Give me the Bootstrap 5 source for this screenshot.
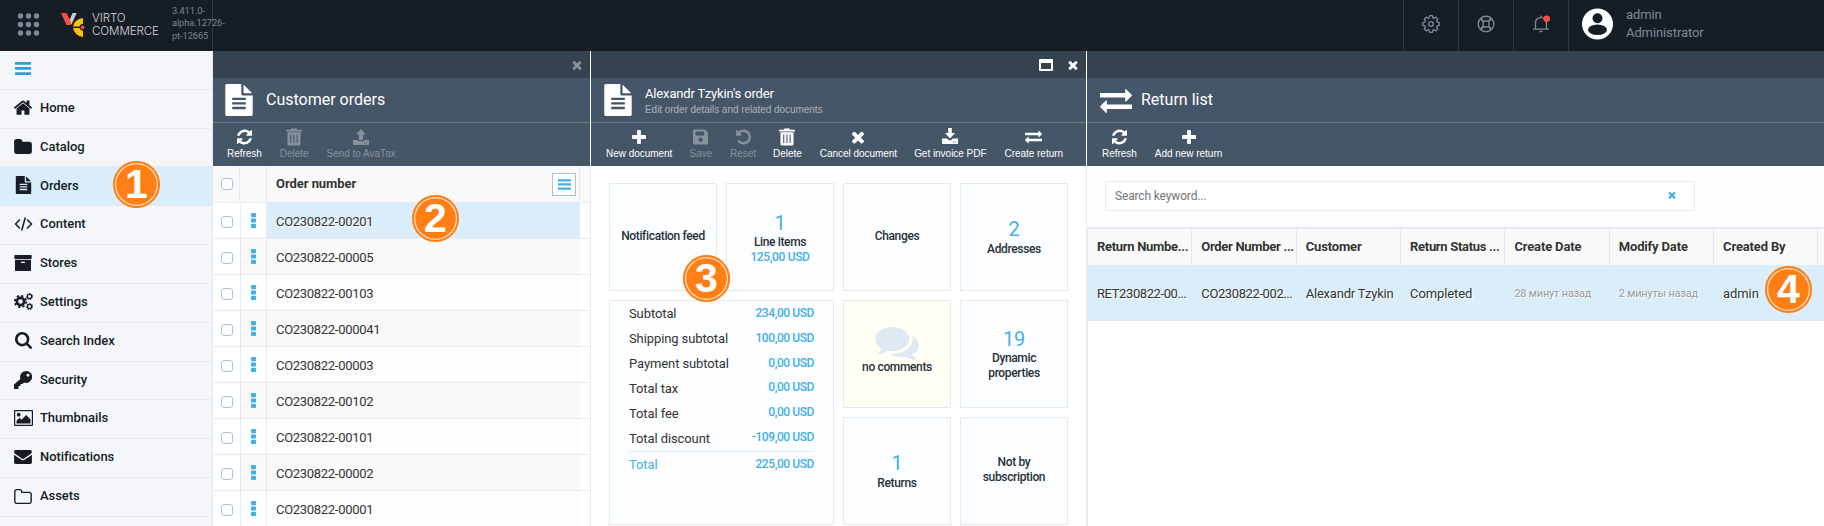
<!DOCTYPE html>
<html lang="en">
<head>
<meta charset="utf-8">
<title>Virto Commerce</title>
<meta name="viewport" content="width=device-width, initial-scale=1">
<link href="https://cdn.jsdelivr.net/npm/bootstrap@5.3.0/dist/css/bootstrap.min.css" rel="stylesheet">
<style>
body{font-family:Roboto,"Liberation Sans",sans-serif;font-size:13px;line-height:18px;color:#333;background:#fff;height:526px;overflow:hidden}
svg{display:block;fill:currentColor}
.topbar{height:51px;background:#161d25;color:#7e8a97}
.brand{width:213px;border-right:1px solid #2a3a4c;padding-left:17px}
.brandname{color:#d6d9dc;font:300 11.6px/13px Inter,sans-serif;letter-spacing:-.1px;width:70px;margin-left:7px;margin-top:-2px}
.ver{font-size:9.3px;line-height:12.5px;letter-spacing:-.1px;width:40px;margin-left:10px;margin-top:-4px;color:#7b8692}
.tcell{width:55px;border-left:1px solid #2a3a4c}
.user{width:256px;border-left:1px solid #2a3a4c;padding-left:12px;font-size:13px;letter-spacing:-.1px;color:#7e8a97}
.side{width:213px;background:#f4f6fa;border-right:1px solid #e4e8f2;color:#161d25;font-weight:500;letter-spacing:-.05px}
.sitem{height:38.82px;border-bottom:1px solid #e7eaf3;padding-left:14px;padding-bottom:1.6px}
.sitem .ico{width:19px;margin-right:7px}
.sitem.on{background:#d9eefa}
.blade{border-right:1px solid #fff}
.bl1{width:378px}.bl2{width:496px}
.blbody{border-right:1px solid #e7eaf3;margin-right:-1px;height:360px}
.bltop{height:27px;background:#35424f;color:#fff;padding-right:9px}
.bl1 .bltop,.bl2 .bltop{padding-right:8px}
.blhead{height:45px;background:#465669;border-bottom:1px solid #6a7882;color:#fff}
.bltitle{font-size:16px;line-height:20px}
.blsub{font:10px/13px "Liberation Sans",sans-serif;letter-spacing:-.05px;color:#aab1b9;margin-top:1px}
.bltools{height:43px;background:#465669;color:#fff;font:10px/12px "Liberation Sans",sans-serif;letter-spacing:-.03px}
.tool{padding:5px 9px 0;white-space:nowrap}
.tool svg{margin-bottom:2px}
.off{color:#86919c}
.grow{height:36px;border-bottom:1px solid #e7eaf3}
.c1{width:28px;border-right:1px solid #e7eaf3;padding-left:8px}
.c2{width:26px;border-right:1px solid #e7eaf3}
.c3{width:313px;padding:2px 0 0 9px;letter-spacing:-.3px}
.grow:nth-child(even) .c2,.grow:nth-child(even) .c3{background:#f9f9f9}
.grow:nth-child(odd) .c2,.grow:nth-child(odd) .c3{background:#fdfdfd}
.grow.sel .c2{background:#fff}
.grow.sel .c3{background:#d9eefa;text-shadow:1px 1px 0 #fff}
.ghead{height:37px;background:#f9f9f9;border-bottom:1px solid #e7eaf3;font-weight:700;text-shadow:1px 1px 0 #fff}
.ghead .c3{padding-top:0}
.chk{width:12px;height:12px;border:1px solid #a5c2d8;border-radius:3px;background:#fff}
.grow .chk{margin-top:2px}
.menubtn{width:24px;height:23px;border:1px solid #a5c2d8;color:#43b0e6;background:#fff}
.tiles{display:grid;grid-template-columns:repeat(4,108px);grid-auto-rows:108px;gap:9px;padding:17px 0 0 18px}
.tile{border:1px solid #e2ebf2;background:#fcfdff;color:#26303b;font-size:12px;letter-spacing:-.35px;line-height:15px;font-weight:500;text-align:center;padding:0 10px}
.num{font-size:20px;line-height:24px;font-weight:400}
.blue{color:#43b0e6}
.totals{grid-column:span 2;grid-row:span 2;border:1px solid #e2ebf2;background:#fcfdff;padding:1px 19px 0}
.trow{height:24.85px;font-size:13px;letter-spacing:-.1px}
.trow b{font-size:12px;font-weight:500;letter-spacing:-.42px;margin-top:-3px}
.searcharea{height:61px;background:#fcfdff;padding:15px 0 0 18px}
.searchbox{width:590px;height:30px;border:1px solid #e7eaf3;background:#fff;padding:0 18px 0 9px;font-size:12px;letter-spacing:-.15px;color:#757575}
.rt{border-top:2px solid #e7eaf3;border-left:1px solid #e7eaf3;height:300px}
.rcell{width:104.35px;padding-left:9px;white-space:nowrap;letter-spacing:-.1px}
.rhead{height:36px;background:#f9f9f9;font-weight:700;text-shadow:1px 1px 0 #fff}
.rhead .rcell{border-right:1px solid #e4e8f2;line-height:36px;letter-spacing:-.15px}
.rrow{height:56px;background:#d9eefa;border-bottom:1px solid #e7eaf3;line-height:57px;text-shadow:1px 1px 0 #fff}
.rrow .ago{font-size:11px;letter-spacing:-.2px;line-height:58px;color:#9a9a9a}
.pin{position:absolute;width:47px;height:47px;border-radius:50%;background:#ff7f14;box-shadow:inset 0 0 0 2px #ff7f14,inset 0 0 0 3.2px #ffe3cc;color:#fff;font:700 41px/46px "Liberation Sans",sans-serif;text-align:center}
</style>
</head>
<body class="position-relative">
<svg width="0" height="0" class="position-absolute">
<symbol id="times" viewBox="302 238 1188 1316"><path d="M1490 1322q0 40-28 68l-136 136q-28 28-68 28t-68-28l-294-294-294 294q-28 28-68 28t-68-28l-136-136q-28-28-28-68t28-68l294-294-294-294q-28-28-28-68t28-68l136-136q28-28 68-28t68 28l294 294 294-294q28-28 68-28t68 28l136 136q28 28 28 68t-28 68l-294 294 294 294q28 28 28 68z"/></symbol>
<symbol id="plus" viewBox="192 128 1408 1408"><path d="M1600 736v192q0 40-28 68t-68 28h-416v416q0 40-28 68t-68 28h-192q-40 0-68-28t-28-68v-416h-416q-40 0-68-28t-28-68v-192q0-40 28-68t68-28h416v-416q0-40 28-68t68-28h192q40 0 68 28t28 68v416h416q40 0 68 28t28 68z"/></symbol>
<symbol id="refresh" viewBox="128 128 1536 1536"><path d="M1639 1056q0 5-1 7-64 268-268 434.5t-478 166.5q-146 0-282.5-55t-243.5-157l-129 129q-19 19-45 19t-45-19-19-45v-448q0-26 19-45t45-19h448q26 0 45 19t19 45-19 45l-137 137q71 66 161 102t187 36q134 0 250-65t186-179q11-17 53-117 8-23 30-23h192q13 0 22.5 9.5t9.5 22.5zm25-800v448q0 26-19 45t-45 19h-448q-26 0-45-19t-19-45 19-45l138-138q-148-137-349-137-134 0-250 65t-186 179q-11 17-53 117-8 23-30 23h-199q-13 0-22.5-9.5t-9.5-22.5v-7q65-268 270-434.5t480-166.5q146 0 284 55.5t245 156.5l130-129q19-19 45-19t45 19 19 45z"/></symbol>
<symbol id="undo" viewBox="128 128 1536 1536"><path d="M1664 896q0 156-61 298t-164 245-245 164-298 61q-172 0-327-72.5t-264-204.5q-7-10-6.5-22.5t8.5-20.5l137-138q10-9 25-9 16 2 23 12 73 95 179 147t225 52q104 0 198.5-40.5t163.5-109.5 109.5-163.5 40.5-198.5-40.5-198.5-109.5-163.5-163.5-109.5-198.5-40.5q-98 0-188 35.5t-160 101.5l137 138q31 30 14 69-17 40-59 40h-448q-26 0-45-19t-19-45v-448q0-42 40-59 39-17 69 14l130 129q107-101 244.5-156.5t284.5-55.5q156 0 298 61t245 164 164 245 61 298z"/></symbol>
<symbol id="exchange" viewBox="0 288 1792 1344"><path d="M1792 1184v192q0 13-9.5 22.5t-22.5 9.5h-1376v192q0 13-9.5 22.5t-22.5 9.5q-12 0-24-10l-319-320q-9-9-9-22 0-14 9-23l320-320q9-9 23-9 13 0 22.5 9.5t9.5 22.5v192h1376q13 0 22.5 9.5t9.5 22.5zm0-544q0 14-9 23l-320 320q-9 9-23 9-13 0-22.5-9.5t-9.5-22.5v-192h-1376q-13 0-22.5-9.5t-9.5-22.5v-192q0-13 9.5-22.5t22.5-9.5h1376v-192q0-14 9-23t23-9q12 0 24 10l319 319q9 9 9 23z"/></symbol>
<symbol id="file" viewBox="128 0 1536 1792"><path d="M1596 476q14 14 28 36h-472v-472q22 14 36 28zm-476 164h544v1056q0 40-28 68t-68 28h-1344q-40 0-68-28t-28-68v-1600q0-40 28-68t68-28h800v544q0 40 28 68t68 28zm160 736v-64q0-14-9-23t-23-9h-704q-14 0-23 9t-9 23v64q0 14 9 23t23 9h704q14 0 23-9t9-23zm0-256v-64q0-14-9-23t-23-9h-704q-14 0-23 9t-9 23v64q0 14 9 23t23 9h704q14 0 23-9t9-23zm0-256v-64q0-14-9-23t-23-9h-704q-14 0-23 9t-9 23v64q0 14 9 23t23 9h704q14 0 23-9t9-23z"/></symbol>
<symbol id="trash" viewBox="0 0 16 17"><path d="M5.5 0h5l.8 1.2H16V3H0V1.200h4.700zM1.500 3.700h13V15.500q0 1.500-1.500 1.500h-10q-1.500 0-1.500-1.500zM4.200 6v8.500h1.100V6zm3.200 0v8.500h1.100V6zm3.200 0v8.500h1.100V6z" fill-rule="evenodd"/></symbol>
<symbol id="up" viewBox="0 0 16 16"><path d="M8 0l5 5.500h-3V11H6V5.500H3zM0 11h5v1.200h6V11h5v4.200q0 .8-.8.800H.8Q0 16 0 15.200zM11 13.500v1h1v-1zm2.200 0v1h1v-1z" fill-rule="evenodd"/></symbol>
<symbol id="down" viewBox="0 0 16 16"><path d="M6.200 0h3.600v5H13L8 10.500 3 5h3.200zM0 10.500h5l1.800 1.800h2.400l1.800-1.800h5v4.700q0 .8-.8.800H.8Q0 16 0 15.200zM11 13.500v1h1v-1zm2.200 0v1h1v-1z" fill-rule="evenodd"/></symbol>
<symbol id="save" viewBox="0 0 15 15"><path d="M1 0h11l3 3v11q0 1-1 1H1q-1 0-1-1V1q0-1 1-1zm1.500 2v4h8.500V2zM7.500 8a2.200 2.200 0 1 0 .01 0z" fill-rule="evenodd"/></symbol>
<symbol id="bars" viewBox="0 0 16 13"><path d="M0 0h16v2.800H0zM0 5h16v2.800H0zM0 10.200h16V13H0z"/></symbol>
</svg>

<header class="topbar d-flex">
  <div class="brand d-flex align-items-center flex-shrink-0">
    <svg width="23" height="24" viewBox="0 0 23 24" style="margin-top:-3px"><g><circle cx="3.500" cy="4" r="2.700"/><circle cx="11.500" cy="4" r="2.700"/><circle cx="19.500" cy="4" r="2.700"/><circle cx="3.500" cy="12.500" r="2.700"/><circle cx="11.500" cy="12.500" r="2.700"/><circle cx="19.500" cy="12.500" r="2.700"/><circle cx="3.500" cy="21" r="2.700"/><circle cx="11.500" cy="21" r="2.700"/><circle cx="19.500" cy="21" r="2.700"/></g></svg>
    <svg width="25" height="25" viewBox="0 0 25 25" class="flex-shrink-0" style="margin-left:20px;margin-top:-3px"><path fill="#ff4a4a" d="M1 1h5.500l3.500 7 1-1v6H6.500z"/><path fill="#c9cbcd" d="M12.500 1h4.200L11.500 12.500 9.800 7.500z"/><path fill="#ffc107" d="M23 6v5.800a4.500 4.500 0 0 0-3.500 2.700H13Q14.500 7 23 6zM13 16h6.500a4.500 4.500 0 0 0 3.500 2.800V25Q14.500 23.500 13 16z"/><circle cx="22.600" cy="15.300" r="1.900" fill="#ff4a4a"/></svg>
    <div class="brandname">VIRTO COMMERCE</div>
    <div class="ver">3.411.0-<br>alpha.12726-<br>pt-12665</div>
  </div>
  <div class="flex-grow-1"></div>
  <div class="tcell d-flex align-items-center justify-content-center"><svg width="18" height="18" viewBox="0 0 18 18" stroke="currentColor" stroke-width="1.300" style="margin-top:-4px;fill:none"><circle cx="9" cy="9" r="2.300"/><path stroke-linejoin="round" d="M7.600.7h2.800l.4 2.100 1.200.5 1.800-1.200 2 2-1.200 1.800.5 1.200 2.200.5v2.800l-2.200.5-.5 1.200 1.200 1.800-2 2-1.800-1.200-1.200.5-.4 2.100H7.600l-.4-2.100-1.200-.5-1.800 1.200-2-2 1.200-1.800-.5-1.200-2.200-.5V7.600l2.200-.5.5-1.200-1.200-1.800 2-2L6 3.300l1.200-.5z"/></svg></div>
  <div class="tcell d-flex align-items-center justify-content-center"><svg width="18" height="18" viewBox="0 0 18 18" stroke="currentColor" stroke-width="1.400" style="margin-top:-4px;fill:none"><circle cx="9" cy="9" r="7.800"/><rect x="6" y="6" width="6" height="6" rx="1.800"/><path d="M6.500 6.500 4 3.300M6.500 6.500 3.300 4M11.500 6.500 14 3.300M11.500 6.500 14.700 4M6.500 11.500 4 14.700M6.500 11.500 3.300 14M11.500 11.500l2.500 3.200M11.500 11.500l3.200 2.500"/></svg></div>
  <div class="tcell d-flex align-items-center justify-content-center"><svg width="18" height="18" viewBox="0 0 18 18" style="margin-top:-4px"><path d="M1 14.200h16M3.500 14V8.200Q3.500 2.600 9 2.600t5.500 5.600V14M9 2.600V.6M7.500 16.500h3" fill="none" stroke="currentColor" stroke-width="1.300"/><circle cx="14.700" cy="3.700" r="3.300" fill="#ff4a4a"/></svg></div>
  <div class="user d-flex">
    <svg width="33" height="33" viewBox="0 0 33 33" class="mt-2"><circle cx="16.500" cy="16" r="15.500" fill="#fff"/><circle cx="16.500" cy="10.300" r="5" fill="#161d25"/><ellipse cx="16.500" cy="21.800" rx="9.500" ry="5.300" fill="#161d25"/></svg>
    <div style="margin:6px 0 0 12px">admin<br>Administrator</div>
  </div>
</header>

<main class="d-flex" style="height:475px">
  <nav class="side flex-shrink-0">
    <div class="sitem d-flex align-items-center"><span class="ico blue"><svg width="16" height="13" style="color:#2f9fd8;margin:-1px 0 0 1px"><use href="#bars"/></svg></span></div>
    <div class="sitem d-flex align-items-center"><span class="ico"><svg width="18" height="15" viewBox="90 240 1612 1300"><path d="M1472 992v480q0 26-19 45t-45 19h-384v-384h-256v384h-384q-26 0-45-19t-19-45v-480q0-1 .5-3t.5-3l575-474 575 474q1 2 1 6zm223-69l-62 74q-8 9-21 11h-3q-13 0-21-7l-692-577-692 577q-12 8-24 7-13-2-21-11l-62-74q-8-10-7-23.500t11-21.500l719-599q32-26 76-26t76 26l244 204v-195q0-14 9-23t23-9h192q14 0 23 9t9 23v408l219 182q10 8 11 21.500t-7 23.500z"/></svg></span>Home</div>
    <div class="sitem d-flex align-items-center"><span class="ico"><svg width="18" height="15" viewBox="64 128 1664 1408"><path d="M1728 608v704q0 92-66 158t-158 66h-1216q-92 0-158-66t-66-158v-960q0-92 66-158t158-66h320q92 0 158 66t66 158v32h672q92 0 158 66t66 158z"/></svg></span>Catalog</div>
    <div class="sitem on d-flex align-items-center"><span class="ico"><svg width="17" height="18" style="margin-left:1px;margin-top:-1px"><use href="#file"/></svg></span>Orders</div>
    <div class="sitem d-flex align-items-center"><span class="ico"><svg width="19" height="14" viewBox="0 0 19 14" style="fill:none" stroke="currentColor" stroke-width="1.500"><path d="M6 2.500 1.500 7 6 11.500M13 2.500 17.500 7 13 11.500M11.300.5 7.700 13.500"/></svg></span>Content</div>
    <div class="sitem d-flex align-items-center"><span class="ico"><svg width="18" height="16" viewBox="64 128 1664 1536"><path d="M1088 832q0-26-19-45t-45-19h-256q-26 0-45 19t-19 45 19 45 45 19h256q26 0 45-19t19-45zm576-192v960q0 26-19 45t-45 19h-1408q-26 0-45-19t-19-45v-960q0-26 19-45t45-19h1408q26 0 45 19t19 45zm64-448v256q0 26-19 45t-45 19h-1536q-26 0-45-19t-19-45v-256q0-26 19-45t45-19h1536q26 0 45 19t19 45z"/></svg></span>Stores</div>
    <div class="sitem d-flex align-items-center"><span class="ico"><svg width="19" height="17" viewBox="0 0 19 17" style="fill:none" stroke="currentColor"><circle cx="6.500" cy="8.500" r="3.700" stroke-width="2.700"/><circle cx="6.500" cy="8.500" r="5.700" stroke-width="1.800" stroke-dasharray="2.240 2.240"/><circle cx="15.500" cy="3.500" r="2.100" stroke-width="1.300"/><circle cx="15.500" cy="3.500" r="3.100" stroke-width="1" stroke-dasharray="1.390 1.390"/><circle cx="15.500" cy="13.500" r="2.100" stroke-width="1.300"/><circle cx="15.500" cy="13.500" r="3.100" stroke-width="1" stroke-dasharray="1.390 1.390"/></svg></span>Settings</div>
    <div class="sitem d-flex align-items-center"><span class="ico"><svg width="17" height="17" viewBox="64 128 1664 1664" style="margin-left:1px"><path d="M1216 832q0-185-131.500-316.500t-316.500-131.500-316.500 131.500-131.500 316.500 131.500 316.500 316.500 131.500 316.500-131.500 131.500-316.500zm512 832q0 52-38 90t-90 38q-54 0-90-38l-343-342q-179 124-399 124-143 0-273.500-55.500t-225-150-150-225-55.500-273.500 55.500-273.500 150-225 225-150 273.500-55.500 273.500 55.500 225 150 150 225 55.500 273.500q0 220-124 399l343 343q37 37 37 90z"/></svg></span>Search Index</div>
    <div class="sitem d-flex align-items-center"><span class="ico"><svg width="18" height="18" viewBox="0 0 18 18"><path fill-rule="evenodd" d="M12 0a6 6 0 1 1-2 11.600L8.500 13H6.500v2h-2v3H0v-4.500L6.400 8A6 6 0 0 1 12 0zm2 2.800a1.500 1.500 0 1 0 .01 0z"/></svg></span>Security</div>
    <div class="sitem d-flex align-items-center"><span class="ico"><svg width="19" height="16" viewBox="0 0 19 16"><path fill-rule="evenodd" d="M1 0h17q1 0 1 1v14q0 1-1 1H1q-1 0-1-1V1q0-1 1-1zm.2 1.200v13.600h16.600V1.200z"/><circle cx="4.700" cy="4.700" r="1.900"/><path d="M2.500 13.500v-2.800l3-3 2 2L12.200 5l4.300 4.500v4z"/></svg></span>Thumbnails</div>
    <div class="sitem d-flex align-items-center"><span class="ico"><svg width="18" height="14" viewBox="0 256 1792 1408"><path d="M1792 710v794q0 66-47 113t-113 47h-1472q-66 0-113-47t-47-113v-794q44 49 101 87 362 246 497 345 57 42 92.500 65.500t94.500 48 110 24.500h2q51 0 110-24.500t94.500-48 92.500-65.500q170-123 498-345 57-39 100-87zm0-294q0 79-49 151t-122 123q-376 261-468 325-10 7-42.500 31t-54 38.500-52 32.500-57.500 27-50 9h-2q-23 0-50-9t-57.500-27-52-32.500-54-38.500-42.500-31q-91-64-262-182.500t-205-142.500q-62-42-117-115.500t-55-136.500q0-78 41.500-130t118.500-52h1472q65 0 112.500 47t47.500 113z"/></svg></span>Notifications</div>
    <div class="sitem d-flex align-items-center"><span class="ico"><svg width="18" height="15" viewBox="64 128 1664 1408"><path d="M1600 1312v-704q0-40-28-68t-68-28h-704q-40 0-68-28t-28-68v-64q0-40-28-68t-68-28h-320q-40 0-68 28t-28 68v960q0 40 28 68t68 28h1216q40 0 68-28t28-68zm128-704v704q0 92-66 158t-158 66h-1216q-92 0-158-66t-66-158v-960q0-92 66-158t158-66h320q92 0 158 66t66 158v32h672q92 0 158 66t66 158z"/></svg></span>Assets</div>
  </nav>

  <section class="blade bl1 flex-shrink-0">
    <div class="bltop d-flex align-items-center justify-content-end off"><svg width="10" height="10"><use href="#times"/></svg></div>
    <div class="blhead d-flex align-items-center"><svg width="28" height="32" style="margin:0 13px 0 12px"><use href="#file"/></svg><div class="bltitle">Customer orders</div></div>
    <div class="bltools d-flex" style="padding-left:5px">
      <div class="tool d-flex flex-column align-items-center"><svg width="15" height="18"><use href="#refresh"/></svg>Refresh</div>
      <div class="tool off d-flex flex-column align-items-center"><svg width="16" height="18"><use href="#trash"/></svg>Delete</div>
      <div class="tool off d-flex flex-column align-items-center"><svg width="16" height="18"><use href="#up"/></svg>Send to AvaTax</div>
    </div>
    <div class="blbody">
    <div class="ghead d-flex align-items-center">
      <div class="c1 h-100 d-flex align-items-center" style="width:27px"><div class="chk"></div></div><div class="c2 h-100" style="width:27px"></div>
      <div class="c3 h-100 d-flex align-items-center justify-content-between" style="border-right:1px solid #e7eaf3;padding-right:3px;letter-spacing:-.05px">Order number<span class="menubtn d-flex align-items-center justify-content-center"><svg width="13" height="11"><use href="#bars"/></svg></span></div>
    </div>
    <div id="orders"></div>
    </div>
  </section>

  <section class="blade bl2 flex-shrink-0">
    <div class="bltop d-flex align-items-center justify-content-end"><svg width="14" height="12" viewBox="0 0 14 12" style="margin-right:15px"><path fill-rule="evenodd" d="M1 0h12q1 0 1 1v10q0 1-1 1H1q-1 0-1-1V1q0-1 1-1zm1 4v6h10V4z"/></svg><svg width="10" height="10"><use href="#times"/></svg></div>
    <div class="blhead d-flex align-items-center"><svg width="28" height="32" style="margin:0 13px 0 13px"><use href="#file"/></svg><div><div style="line-height:17px;letter-spacing:-.15px">Alexandr Tzykin's order</div><div class="blsub">Edit order details and related documents</div></div></div>
    <div class="bltools d-flex" style="padding-left:6px">
      <div class="tool d-flex flex-column align-items-center"><svg width="14" height="18"><use href="#plus"/></svg>New document</div>
      <div class="tool off d-flex flex-column align-items-center" style="padding-left:8px"><svg width="15" height="18"><use href="#save"/></svg>Save</div>
      <div class="tool off d-flex flex-column align-items-center"><svg width="15" height="18"><use href="#undo"/></svg>Reset</div>
      <div class="tool d-flex flex-column align-items-center" style="padding-left:8px"><svg width="16" height="18"><use href="#trash"/></svg>Delete</div>
      <div class="tool d-flex flex-column align-items-center"><svg width="12" height="18"><use href="#times"/></svg>Cancel document</div>
      <div class="tool d-flex flex-column align-items-center" style="padding-left:8px"><svg width="16" height="18" style="margin-top:-1px;margin-bottom:3px"><use href="#down"/></svg>Get invoice PDF</div>
      <div class="tool d-flex flex-column align-items-center"><svg width="17" height="18"><use href="#exchange"/></svg>Create return</div>
    </div>
    <div class="blbody tiles">
      <div class="tile d-flex flex-column justify-content-center" style="padding:0 0 2px">Notification feed</div>
      <div class="tile d-flex flex-column justify-content-center"><span class="num blue" style="margin-top:1px">1</span>Line items<span class="blue">125,00 USD</span></div>
      <div class="tile d-flex flex-column justify-content-center" style="padding-bottom:2px">Changes</div>
      <div class="tile d-flex flex-column justify-content-center"><span class="num blue" style="margin-bottom:1px">2</span>Addresses</div>
      <div class="totals">
        <div class="trow d-flex align-items-center justify-content-between">Subtotal<b class="blue">234,00 USD</b></div>
        <div class="trow d-flex align-items-center justify-content-between">Shipping subtotal<b class="blue">100,00 USD</b></div>
        <div class="trow d-flex align-items-center justify-content-between">Payment subtotal<b class="blue">0,00 USD</b></div>
        <div class="trow d-flex align-items-center justify-content-between">Total tax<b class="blue">0,00 USD</b></div>
        <div class="trow d-flex align-items-center justify-content-between">Total fee<b class="blue">0,00 USD</b></div>
        <div class="trow d-flex align-items-center justify-content-between">Total discount<b class="blue">-109,00 USD</b></div>
        <div class="trow d-flex align-items-center justify-content-between blue" style="border-top:1px solid #e2ebf2;height:27px">Total<b>225,00 USD</b></div>
      </div>
      <div class="tile d-flex flex-column align-items-center justify-content-center" style="background:#fffff5;padding:0"><svg width="44" height="36" viewBox="0 128 1792 1536" preserveAspectRatio="none" style="color:#dee9f1;margin-top:-10px"><path d="M1408 768q0 139-94 257t-256.500 186.500-353.500 68.500q-86 0-176-16-124 88-278 128-36 9-86 16h-3q-11 0-20.500-8t-11.500-21q-1-3-1-6.500t.5-6.500 2-6l2.500-5 3.500-5.500 4-5 4.500-5 4-4.500q5-6 23-25t26-29.500 22.500-29 25-38.500 20.500-44q-124-72-195-177t-71-224q0-139 94-257t256.500-186.500 353.500-68.500 353.500 68.500 256.500 186.500 94 257zm384 256q0 120-71 224.500t-195 176.500q10 24 20.500 44t25 38.500 22.500 29 26 29.500 23 25q1 1 4 4.500t4.500 5 4 5 3.500 5.500l2.500 5 2 6 .5 6.500-1 6.500q-3 14-13 22t-22 7q-50-7-86-16-154-40-278-128-90 16-176 16-271 0-472-132 58 4 88 4 161 0 309-45t264-129q125-92 192-212t67-254q0-77-23-152 129 71 204 178t75 230z"/></svg>no comments</div>
      <div class="tile d-flex flex-column justify-content-center"><span class="num blue">19</span>Dynamic properties</div>
      <div class="tile d-flex flex-column justify-content-center"><span class="num blue" style="margin-bottom:1px">1</span>Returns</div>
      <div class="tile d-flex flex-column justify-content-center" style="padding-bottom:2px">Not by subscription</div>
    </div>
  </section>

  <section class="flex-grow-1 overflow-hidden">
    <div class="bltop"></div>
    <div class="blhead d-flex align-items-center"><svg width="32" height="24" style="margin:2px 9px 0 13px"><use href="#exchange"/></svg><div class="bltitle">Return list</div></div>
    <div class="bltools d-flex" style="padding-left:6px">
      <div class="tool d-flex flex-column align-items-center"><svg width="15" height="18"><use href="#refresh"/></svg>Refresh</div>
      <div class="tool d-flex flex-column align-items-center"><svg width="14" height="18"><use href="#plus"/></svg>Add new return</div>
    </div>
    <div class="searcharea"><div class="searchbox d-flex align-items-center justify-content-between">Search keyword...<svg width="8" height="8" class="blue" style="margin-top:-3px"><use href="#times"/></svg></div></div>
    <div class="rt">
      <div class="rhead d-flex"><div class="rcell flex-shrink-0" style="letter-spacing:-.3px">Return Numbe...</div><div class="rcell flex-shrink-0" style="letter-spacing:-.3px">Order Number ...</div><div class="rcell flex-shrink-0">Customer</div><div class="rcell flex-shrink-0" style="letter-spacing:-.3px">Return Status ...</div><div class="rcell flex-shrink-0">Create Date</div><div class="rcell flex-shrink-0">Modify Date</div><div class="rcell flex-shrink-0">Created By</div></div>
      <div class="rrow d-flex"><div class="rcell flex-shrink-0" style="letter-spacing:-.4px">RET230822-00...</div><div class="rcell flex-shrink-0" style="letter-spacing:-.4px">CO230822-002...</div><div class="rcell flex-shrink-0" style="letter-spacing:-.2px">Alexandr Tzykin</div><div class="rcell flex-shrink-0">Completed</div><div class="rcell flex-shrink-0 ago">28 минут назад</div><div class="rcell flex-shrink-0 ago">2 минуты назад</div><div class="rcell flex-shrink-0">admin</div></div>
    </div>
  </section>
</main>

<div class="pin" style="left:113px;top:161px">1</div>
<div class="pin" style="left:412px;top:195px">2</div>
<div class="pin" style="left:683px;top:255px">3</div>
<div class="pin" style="left:1765px;top:266px">4</div>

<script>
document.getElementById('orders').innerHTML = ['CO230822-00201','CO230822-00005','CO230822-00103','CO230822-000041','CO230822-00003','CO230822-00102','CO230822-00101','CO230822-00002','CO230822-00001'].map(function(n,i){
  return '<div class="grow d-flex'+(i?'':' sel')+'"><div class="c1 d-flex align-items-center"><div class="chk"></div></div><div class="c2 d-flex align-items-center justify-content-center"><svg class="blue" width="5" height="15" viewBox="0 0 5 15"><rect width="5" height="4.200" rx=".8"/><rect y="5.400" width="5" height="4.200" rx=".8"/><rect y="10.800" width="5" height="4.200" rx=".8"/></svg></div><div class="c3 d-flex align-items-center">'+n+'</div></div>';
}).join('');
</script>
<script src="https://cdn.jsdelivr.net/npm/bootstrap@5.3.0/dist/js/bootstrap.bundle.min.js"></script>
</body>
</html>
